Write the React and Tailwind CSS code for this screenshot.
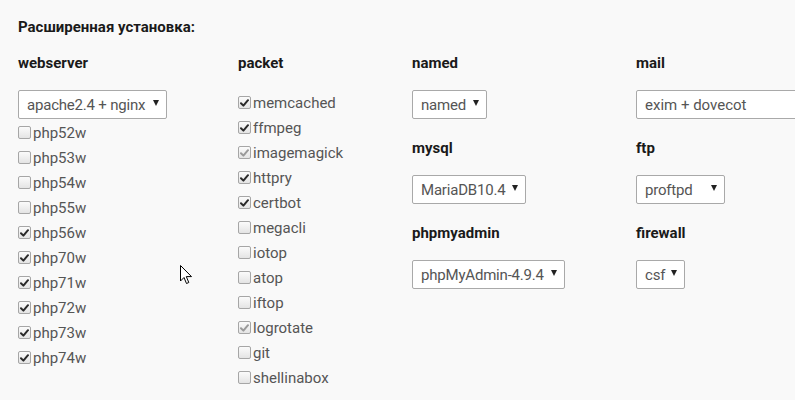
import React from "react";

const font = { fontFamily: "Roboto, 'Liberation Sans', sans-serif" };

function Box({ checked, disabled }) {
  return (
    <span className="relative inline-flex h-[13px] w-[13px] shrink-0 items-center justify-center rounded-[2px] border border-[#a6a6a6] bg-gradient-to-b from-[#fbfbfb] to-[#e4e4e4]">
      {checked && (
        <svg width="9" height="8" viewBox="0 0 9 8" className="block">
          <path
            d="M1 4.3 L3.4 6.6 L8 1.2"
            fill="none"
            stroke={disabled ? "#9a9a9a" : "#2a2a2a"}
            strokeWidth="2"
            strokeLinecap="round"
            strokeLinejoin="round"
          />
        </svg>
      )}
    </span>
  );
}

function Check({ label, checked, disabled }) {
  return (
    <div className="flex h-[25px] items-center gap-[2px]">
      <Box checked={checked} disabled={disabled} />
      <span className="text-[15px] leading-[18px] text-[#555]">{label}</span>
    </div>
  );
}

function Select({ value, w }) {
  return (
    <div
      className={`flex h-[29px] items-center rounded-[2px] border border-[#a9a9a9] bg-white pl-[8px] pr-[7px] ${w}`}
    >
      <span className="whitespace-nowrap text-[15px] leading-[18px] tracking-[-0.2px] text-[#555]">
        {value}
      </span>
      <svg width="6" height="6" viewBox="0 0 6 6" className="mb-[4px] ml-auto shrink-0">
        <path d="M0 0 H6 L3 6 Z" fill="#222" />
      </svg>
    </div>
  );
}

function Heading({ children }) {
  return <div className="h-[20px] text-[15px] font-bold leading-[20px] text-[#1a1a1a]">{children}</div>;
}

export default function App() {
  const php = [
    ["php52w", false],
    ["php53w", false],
    ["php54w", false],
    ["php55w", false],
    ["php56w", true],
    ["php70w", true],
    ["php71w", true],
    ["php72w", true],
    ["php73w", true],
    ["php74w", true],
  ];
  const pkts = [
    ["memcached", true],
    ["ffmpeg", true],
    ["imagemagick", true, true],
    ["httpry", true],
    ["certbot", true],
    ["megacli", false],
    ["iotop", false],
    ["atop", false],
    ["iftop", false],
    ["logrotate", true, true],
    ["git", false],
    ["shellinabox", false],
  ];
  return (
    <div className="relative h-[400px] w-[795px] overflow-hidden bg-[#f9f9f9] pl-[18px] pt-[17px]" style={font}>
      <Heading>Расширенная установка:</Heading>
      <div className="mt-[16px] grid grid-cols-[220px_174px_224px_1fr]">
        <div>
          <Heading>webserver</Heading>
          <div className="mt-[17px]">
            <Select value="apache2.4 + nginx" w="w-[149px]" />
            <div className="mt-[1px]">
              {php.map(([l, c]) => (
                <Check key={l} label={l} checked={c} />
              ))}
            </div>
          </div>
        </div>
        <div>
          <Heading>packet</Heading>
          <div className="mt-[17px]">
            {pkts.map(([l, c, d]) => (
              <Check key={l} label={l} checked={c} disabled={d} />
            ))}
          </div>
        </div>
        <div className="flex flex-col">
          <Heading>named</Heading>
          <div className="mt-[17px]">
            <Select value="named" w="w-[75px]" />
          </div>
          <div className="mt-[19px]">
            <Heading>mysql</Heading>
          </div>
          <div className="mt-[17px]">
            <Select value="MariaDB10.4" w="w-[114px]" />
          </div>
          <div className="mt-[19px]">
            <Heading>phpmyadmin</Heading>
          </div>
          <div className="mt-[17px]">
            <Select value="phpMyAdmin-4.9.4" w="w-[153px]" />
          </div>
        </div>
        <div className="flex flex-col">
          <Heading>mail</Heading>
          <div className="mt-[17px] flex h-[29px] w-[180px] items-center rounded-[2px] border border-[#a9a9a9] bg-white pl-[8px]">
            <span className="text-[15px] leading-[18px] text-[#555]">exim + dovecot</span>
          </div>
          <div className="mt-[19px]">
            <Heading>ftp</Heading>
          </div>
          <div className="mt-[17px]">
            <Select value="proftpd" w="w-[89px]" />
          </div>
          <div className="mt-[19px]">
            <Heading>firewall</Heading>
          </div>
          <div className="mt-[17px]">
            <Select value="csf" w="w-[49px]" />
          </div>
        </div>
      </div>
      <svg className="absolute left-[180px] top-[265px]" width="13" height="20" viewBox="0 0 13 20">
        <path
          d="M0.5 0.5 L0.5 16 L4 12.5 L6.5 18.5 L8.8 17.5 L6.3 11.6 L11.5 11.6 Z"
          fill="#fff"
          stroke="#000"
          strokeWidth="1"
          strokeLinejoin="miter"
        />
      </svg>
    </div>
  );
}
